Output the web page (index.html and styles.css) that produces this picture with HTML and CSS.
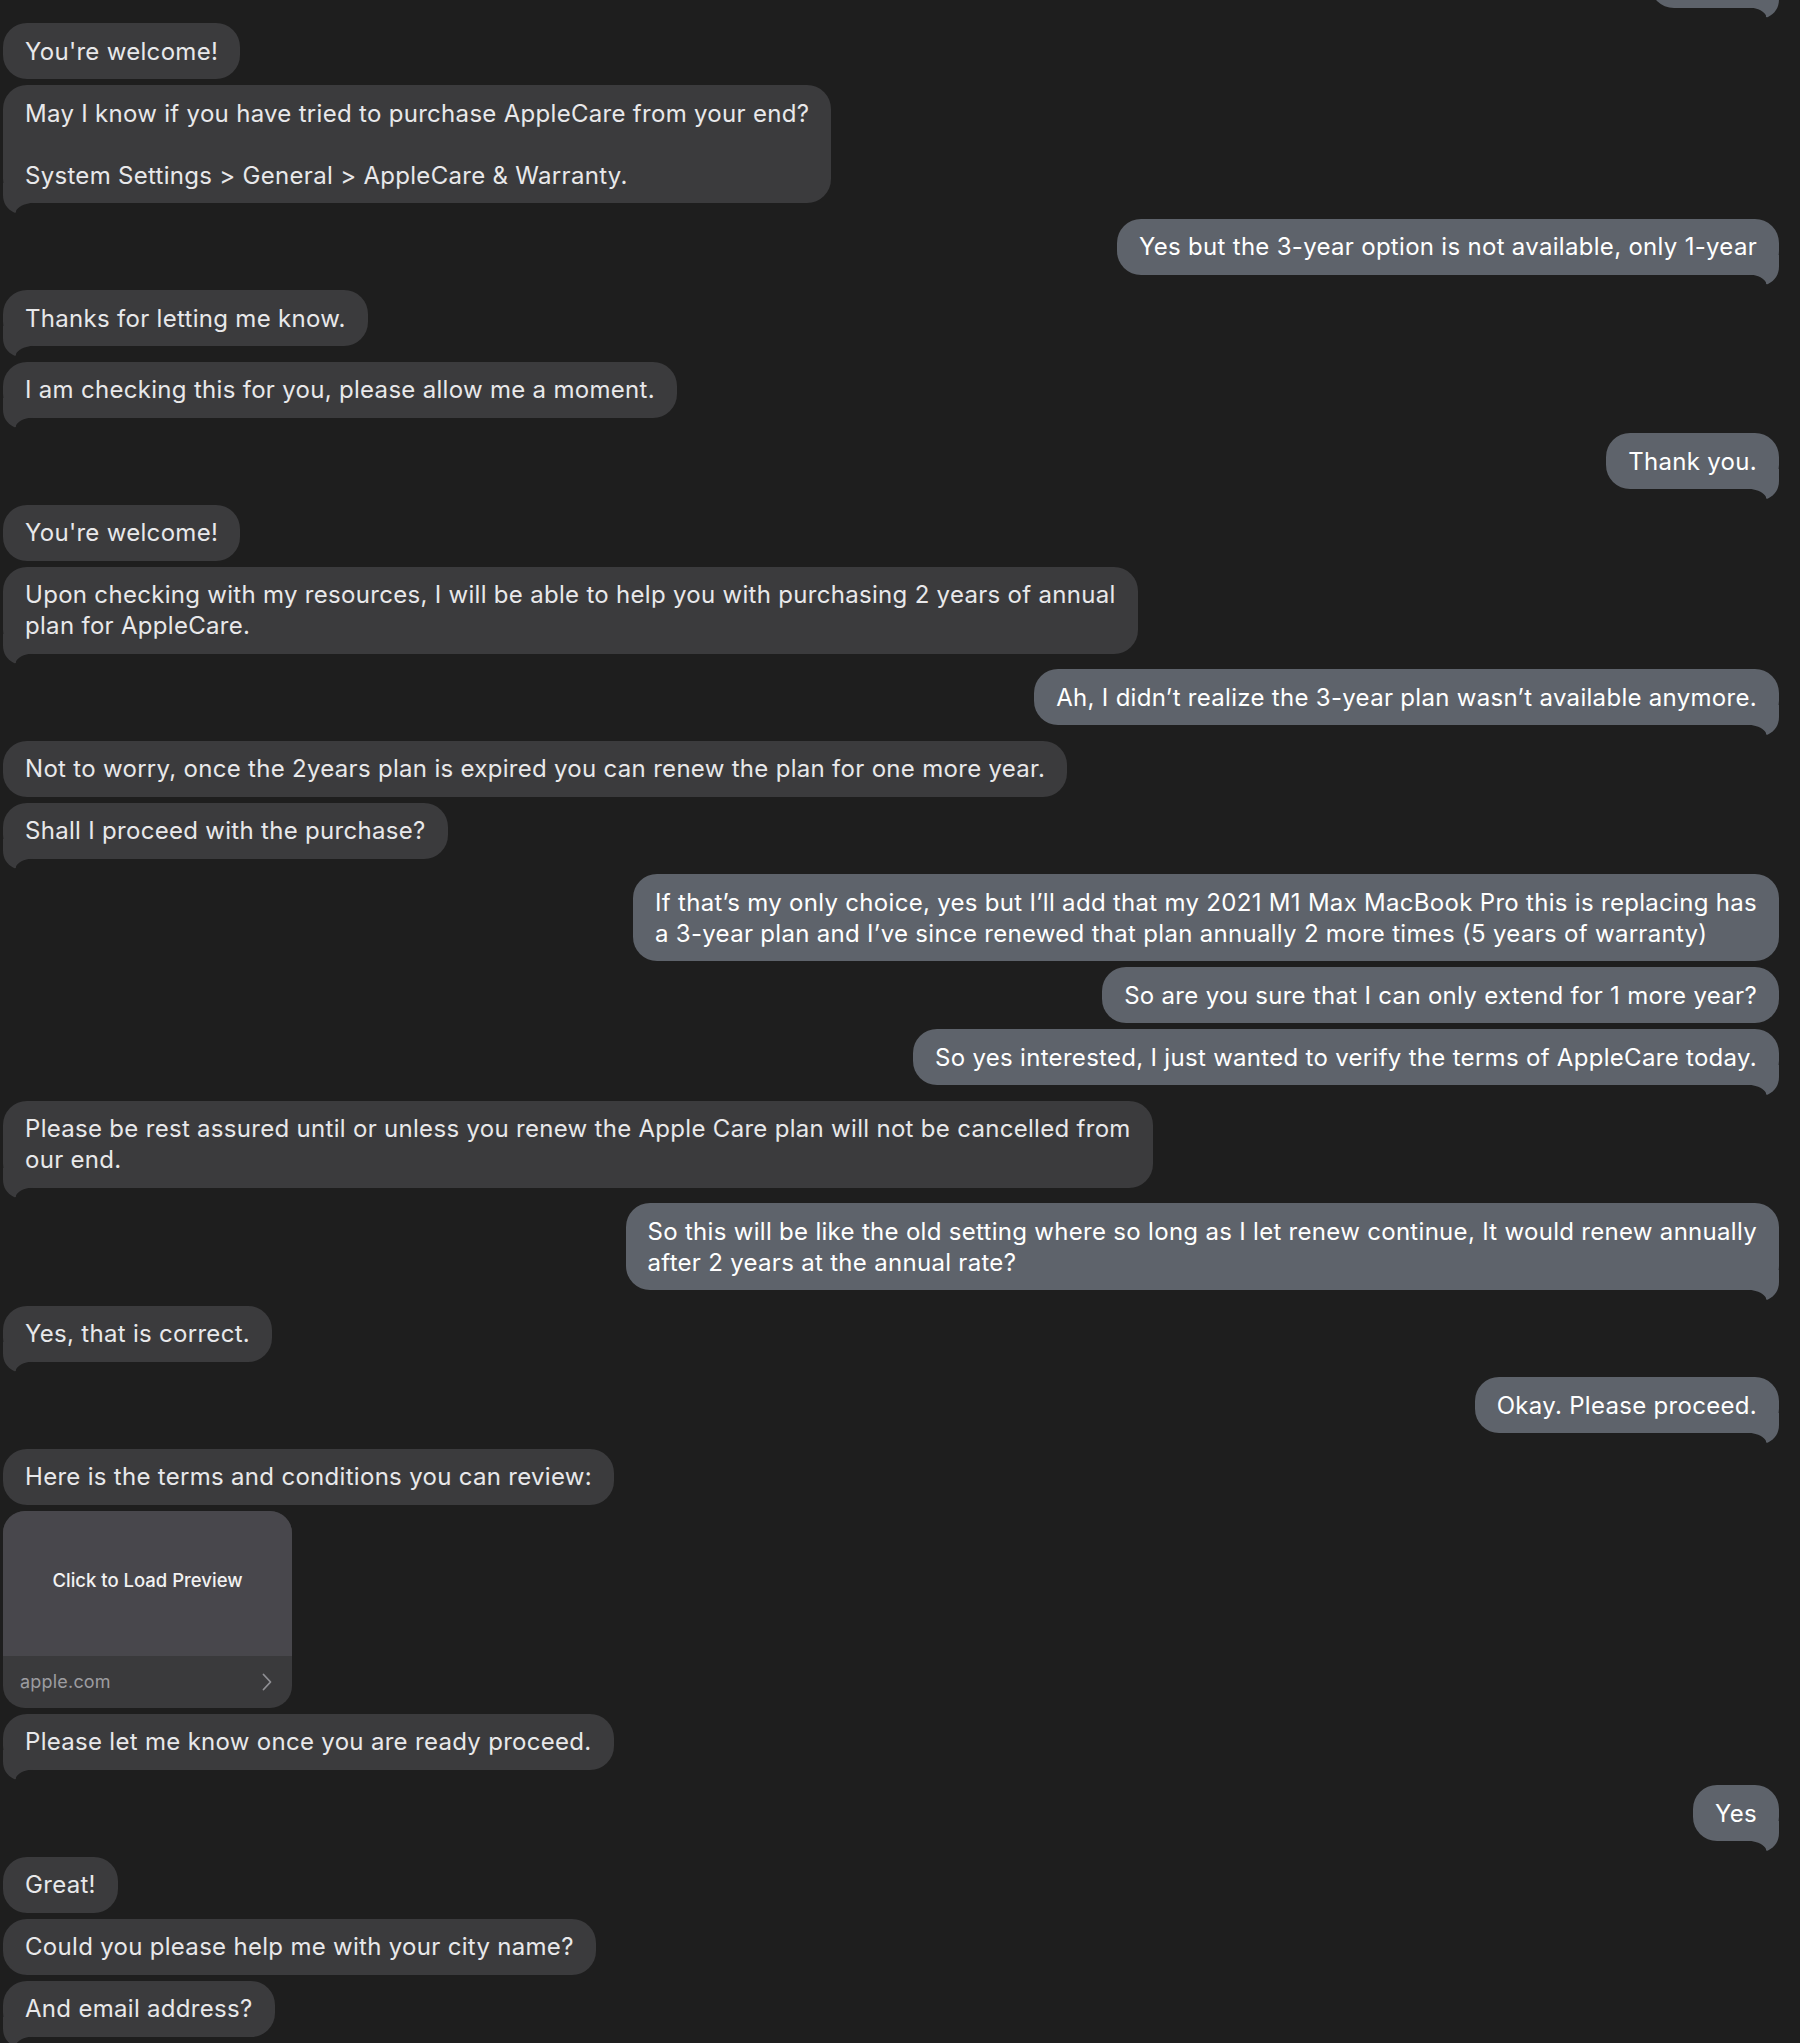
FILE: index.html
```html
<!DOCTYPE html>
<html lang="en">
<head>
<meta charset="utf-8">
<title>Messages</title>
<link rel="stylesheet" href="styles.css">
</head>
<body>
<div class="chat">
  <div class="row out cut-row"><div class="msg tail cut"></div></div>

  <div class="row in"><div class="msg">You're welcome!</div></div>
  <div class="row in"><div class="msg tail">May I know if you have tried to purchase AppleCare from your end?<br><br>System Settings &gt; General &gt; AppleCare &amp; Warranty.</div></div>

  <div class="row out"><div class="msg tail">Yes but the 3-year option is not available, only 1-year</div></div>

  <div class="row in"><div class="msg tail">Thanks for letting me know.</div></div>
  <div class="row in"><div class="msg tail">I am checking this for you, please allow me a moment.</div></div>

  <div class="row out"><div class="msg tail">Thank you.</div></div>

  <div class="row in"><div class="msg">You're welcome!</div></div>
  <div class="row in"><div class="msg tail">Upon checking with my resources, I will be able to help you with purchasing 2 years of annual<br>plan for AppleCare.</div></div>

  <div class="row out"><div class="msg tail">Ah, I didn’t realize the 3-year plan wasn’t available anymore.</div></div>

  <div class="row in"><div class="msg">Not to worry, once the 2years plan is expired you can renew the plan for one more year.</div></div>
  <div class="row in"><div class="msg tail">Shall I proceed with the purchase?</div></div>

  <div class="row out"><div class="msg">If that’s my only choice, yes but I’ll add that my 2021 M1 Max MacBook Pro this is replacing has<br>a 3-year plan and I’ve since renewed that plan annually 2 more times (5 years of warranty)</div></div>
  <div class="row out"><div class="msg">So are you sure that I can only extend for 1 more year?</div></div>
  <div class="row out"><div class="msg tail">So yes interested, I just wanted to verify the terms of AppleCare today.</div></div>

  <div class="row in"><div class="msg tail">Please be rest assured until or unless you renew the Apple Care plan will not be cancelled from<br>our end.</div></div>

  <div class="row out"><div class="msg tail">So this will be like the old setting where so long as I let renew continue, It would renew annually<br>after 2 years at the annual rate?</div></div>

  <div class="row in"><div class="msg tail">Yes, that is correct.</div></div>

  <div class="row out"><div class="msg tail">Okay. Please proceed.</div></div>

  <div class="row in"><div class="msg">Here is the terms and conditions you can review:</div></div>
  <div class="row in">
    <div class="card">
      <div class="card-preview">Click to Load Preview</div>
      <div class="card-footer">
        <span class="card-domain">apple.com</span>
        <svg class="chev" width="10" height="18" viewBox="0 0 10 18"><path d="M1.5 1.5 L8.5 9 L1.5 16.5" fill="none" stroke="#8e8e93" stroke-width="1.8" stroke-linecap="round" stroke-linejoin="round"/></svg>
      </div>
    </div>
  </div>
  <div class="row in"><div class="msg tail">Please let me know once you are ready proceed.</div></div>

  <div class="row out"><div class="msg tail">Yes</div></div>

  <div class="row in"><div class="msg">Great!</div></div>
  <div class="row in"><div class="msg">Could you please help me with your city name?</div></div>
  <div class="row in"><div class="msg tail">And email address?</div></div>
</div>
</body>
</html>
```
FILE: styles.css
```css
html, body {
  margin: 0;
  padding: 0;
}
body {
  background: #1e1e1e;
  font-family: Inter, "Noto Sans", "Liberation Sans", sans-serif;
  overflow: hidden;
}
.chat {
  display: flex;
  flex-direction: column;
  padding: 0 21px 0 3px;
}
.row {
  display: flex;
  margin-bottom: 6px;
}
.row.in { justify-content: flex-start; }
.row.out { justify-content: flex-end; }
.row:has(.tail) { margin-bottom: 15.5px; }

.cut-row { margin-top: -48.5px; }
.msg.cut { width: 129px; height: 56px; padding: 0; }

.msg {
  position: relative;
  z-index: 0;
  box-sizing: border-box;
  padding: 12.5px 22px;
  border-radius: 24px;
  font-size: 24px;
  line-height: 31px;
  white-space: nowrap;
  letter-spacing: 0.3px;
}
.in .msg {
  background: #3b3b3d;
  color: #e8e8ea;
}
.out .msg {
  background: #5e636b;
  color: #ffffff;
}
.msg.tail::before {
  content: "";
  position: absolute;
  z-index: -1;
  bottom: -10px;
  width: 30px;
  height: 30px;
  background: inherit;
}
.in .msg.tail::before {
  left: 0;
  clip-path: path("M 0 0 L 0 12 C 0 20, 4 26, 11 29.5 Q 13.5 30.5, 13 28 C 15 24, 20 21, 30 19.5 L 30 0 Z");
}
.out .msg.tail::before {
  right: 0;
  clip-path: path("M 30 0 L 30 12 C 30 20, 26 26, 19 29.5 Q 16.5 30.5, 17 28 C 15 24, 10 21, 0 19.5 L 0 0 Z");
}

.card {
  width: 289px;
  border-radius: 22px;
  overflow: hidden;
  background: #3a3a3c;
}
.card-preview {
  height: 145px;
  background: #48474c;
  display: flex;
  align-items: center;
  justify-content: center;
  color: #f2f2f2;
  font-size: 18.5px;
  font-weight: 500;
  letter-spacing: 0;
  padding-bottom: 6px;
  box-sizing: border-box;
}
.card-footer {
  height: 52px;
  display: flex;
  align-items: center;
  justify-content: space-between;
  padding: 0 20px 0 17px;
  box-sizing: border-box;
}
.card-domain {
  color: #9c9ca0;
  font-size: 18px;
  letter-spacing: 0.2px;
}
.chev { display: block; }
```
